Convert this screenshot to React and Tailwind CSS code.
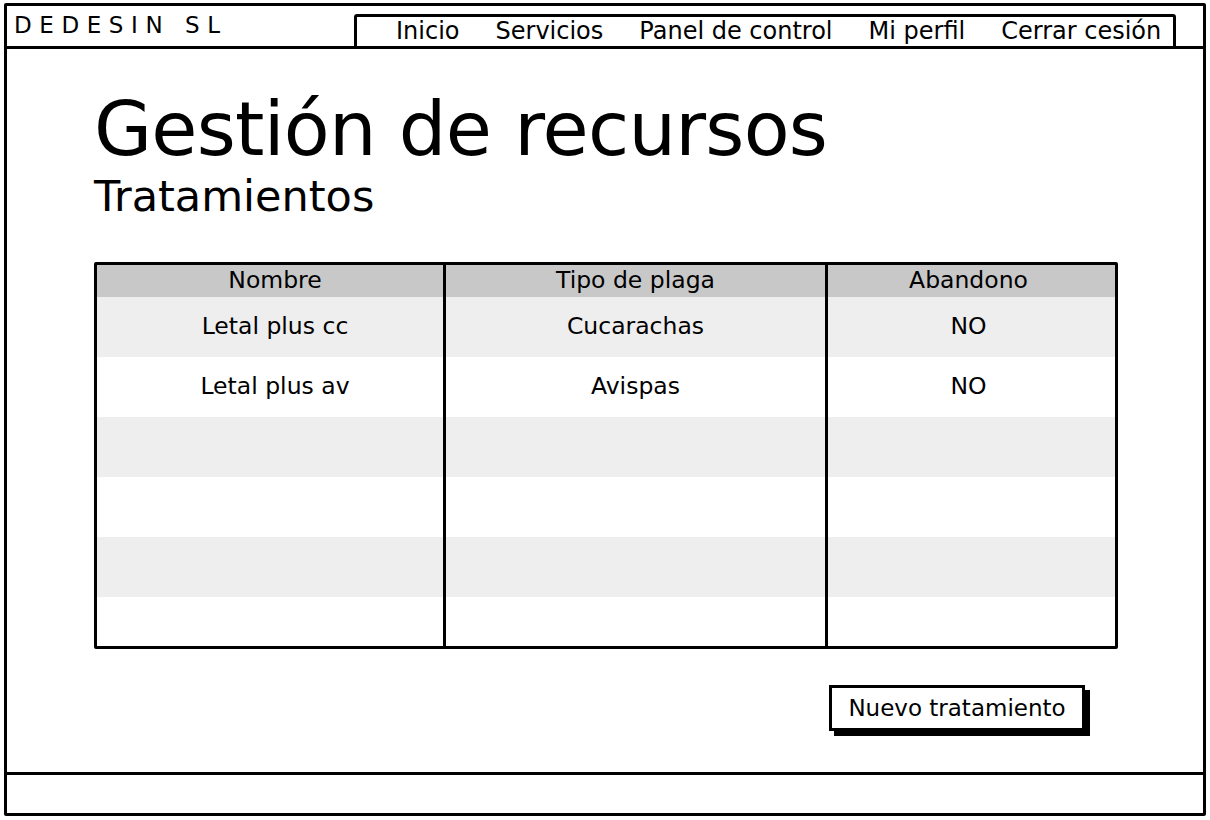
import React from 'react';

const rows = [
  { nombre: 'Letal plus cc', plaga: 'Cucarachas', abandono: 'NO' },
  { nombre: 'Letal plus av', plaga: 'Avispas', abandono: 'NO' },
  { nombre: '', plaga: '', abandono: '' },
  { nombre: '', plaga: '', abandono: '' },
  { nombre: '', plaga: '', abandono: '' },
  { nombre: '', plaga: '', abandono: '' },
];

const navItems = ['Inicio', 'Servicios', 'Panel de control', 'Mi perfil', 'Cerrar cesión'];

export default function App() {
  return (
    <div
      className="w-[1210px] h-[820px] bg-white pl-[4px] pt-[3px] text-black"
      style={{ fontFamily: '"DejaVu Sans", "Liberation Sans", sans-serif' }}
    >
      <div className="w-[1202px] h-[813px] border-[3px] border-black rounded-[2px] flex flex-col">
        {/* header */}
        <div className="h-[43px] border-b-[3px] border-black flex items-end justify-between">
          <div className="self-start pt-[5px] pl-[7px] text-[23px] leading-[28px] tracking-[0.33em]">
            DEDESIN SL
          </div>
          <div className="w-[822px] h-[35px] mr-[27px] mb-[-3px] border-[3px] border-black rounded-[3px] flex items-center gap-[36px] pl-[39px] text-[24px] leading-none">
            {navItems.map((item) => (
              <span key={item} className="pb-[1px]">{item}</span>
            ))}
          </div>
        </div>

        {/* main */}
        <div className="flex-1 pl-[87px] pt-[40px]">
          <h1 className="text-[75px] leading-[80px] tracking-[-0.01em]">Gestión de recursos</h1>
          <h2 className="text-[43px] leading-[44px] mt-[5px]">Tratamientos</h2>

          <div className="mt-[44px] w-[1024px] h-[387px] border-[3px] border-black rounded-[2px] flex flex-col overflow-hidden">
            <div className="h-[32px] shrink-0 bg-[#c8c8c8] grid grid-cols-[349px_382px_1fr] text-[23.5px]">
              <div className="border-r-[3px] border-black text-center leading-[30px] pl-[10px]">Nombre</div>
              <div className="border-r-[3px] border-black text-center leading-[30px]">Tipo de plaga</div>
              <div className="text-center leading-[30px] pr-[6px]">Abandono</div>
            </div>
            {rows.map((r, i) => (
              <div
                key={i}
                className={`grid shrink-0 grid-cols-[349px_382px_1fr] text-[23.5px] ${i === 5 ? 'h-[49px]' : 'h-[60px]'} ${i % 2 === 0 ? 'bg-[#eeeeee]' : 'bg-white'}`}
              >
                <div className="border-r-[3px] border-black text-center leading-[58px] pl-[10px]">{r.nombre}</div>
                <div className="border-r-[3px] border-black text-center leading-[58px]">{r.plaga}</div>
                <div className="text-center leading-[58px] pr-[6px]">{r.abandono}</div>
              </div>
            ))}
          </div>

          <div className="w-[1024px] flex justify-end mt-[36px]">
            <button className="mr-[33px] w-[256px] h-[46px] border-[3px] border-black bg-white shadow-[5px_5px_0_#000] text-[23px] leading-none">
              Nuevo tratamiento
            </button>
          </div>
        </div>

        {/* footer */}
        <div className="h-[41px] border-t-[3px] border-black"></div>
      </div>
    </div>
  );
}
